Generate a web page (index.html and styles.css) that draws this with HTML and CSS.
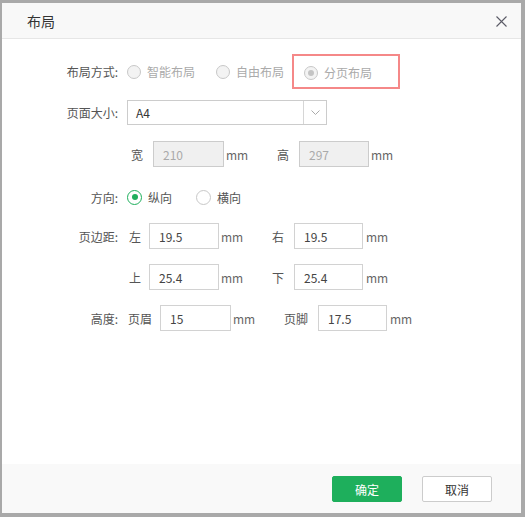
FILE: index.html
```html
<!DOCTYPE html>
<html>
<head>
<meta charset="utf-8">
<link rel="stylesheet" href="styles.css">
</head>
<body>
<div class="dialog">
  <div class="header">
    <span class="title">布局</span>
    <svg class="close" width="11" height="11" viewBox="0 0 11 11"><path d="M0.5 0.5 L10.5 10.5 M10.5 0.5 L0.5 10.5" stroke="#5a5a66" stroke-width="1.1" fill="none"/></svg>
  </div>
  <div class="content">
    <div class="row r1">
      <span class="label">布局方式:</span>
      <span class="opt dis o1"><span class="radio"></span>智能布局</span>
      <span class="opt dis o2"><span class="radio"></span>自由布局</span>
      <span class="hl"><span class="opt dis"><span class="radio sel-dis"></span>分页布局</span></span>
    </div>
    <div class="row r2">
      <span class="label">页面大小:</span>
      <div class="select"><span class="sval">A4</span><span class="sarrow"><svg width="9" height="5" viewBox="0 0 9 5"><path d="M0.5 0.5 L4.5 4.5 L8.5 0.5" stroke="#aaa" stroke-width="1" fill="none"/></svg></span></div>
    </div>
    <div class="row r3">
      <span class="label"></span>
      <span class="sub s-w">宽</span>
      <span class="input disabled w71">210</span>
      <span class="unit u51">mm</span>
      <span class="sub s-h">高</span>
      <span class="input disabled w70">297</span>
      <span class="unit">mm</span>
    </div>
    <div class="row r4">
      <span class="label">方向:</span>
      <span class="opt o-v"><span class="radio on"></span>纵向</span>
      <span class="opt"><span class="radio"></span>横向</span>
    </div>
    <div class="row r5">
      <span class="label">页边距:</span>
      <span class="sub s-l">左</span>
      <span class="input w70">19.5</span>
      <span class="unit u51">mm</span>
      <span class="sub s-h">右</span>
      <span class="input w69">19.5</span>
      <span class="unit u3">mm</span>
    </div>
    <div class="row r6">
      <span class="label"></span>
      <span class="sub s-l">上</span>
      <span class="input w70">25.4</span>
      <span class="unit u51">mm</span>
      <span class="sub s-h">下</span>
      <span class="input w69">25.4</span>
      <span class="unit u3">mm</span>
    </div>
    <div class="row r7">
      <span class="label">高度:</span>
      <span class="sub s-hd">页眉</span>
      <span class="input w71">15</span>
      <span class="unit u50">mm</span>
      <span class="sub s-ft">页脚</span>
      <span class="input w69">17.5</span>
      <span class="unit u3">mm</span>
    </div>
  </div>
  <div class="footer">
    <button class="btn primary">确定</button>
    <button class="btn">取消</button>
  </div>
</div>
</body>
</html>
```
FILE: styles.css
```css
* { box-sizing: border-box; }
html, body { margin: 0; padding: 0; }
body {
  width: 525px;
  height: 517px;
  background: #a9a9a9;
  font-family: "Noto Sans CJK SC", "Noto Sans", sans-serif;
  font-size: 12px;
  color: #555;
  overflow: hidden;
  padding-top: 3px;
  padding-left: 2px;
}
.dialog {
  width: 519px;
  height: 510px;
  background: #fff;
  display: flex;
  flex-direction: column;
}
.header {
  height: 36px;
  background: #f8f8f8;
  border-bottom: 1px solid #e6e6e6;
  display: flex;
  align-items: center;
  justify-content: space-between;
  padding: 0 14px 0 25px;
  flex: none;
}
.title { font-size: 14px; color: #333; }
.close { display: block; margin-top: 1px; }
.content {
  flex: 1;
  padding-top: 15px;
}
.row {
  display: flex;
  align-items: center;
}
.label {
  width: 116px;
  margin-right: 9px;
  text-align: right;
  color: #555;
  flex: none;
}
.r1 { height: 35px; }
.r2 { margin-top: 11px; }
.r3 { margin-top: 16px; }
.r4 { margin-top: 20px; height: 20px; }
.r5 { margin-top: 16px; }
.r6 { margin-top: 15px; }
.r7 { margin-top: 15px; }

.opt { display: flex; align-items: center; color: #555; white-space: nowrap; }
.opt.dis { color: #aaa; }
.radio {
  width: 14px;
  height: 14px;
  border: 1px solid #c8c8c8;
  border-radius: 50%;
  background: #f3f3f3;
  margin-right: 6px;
  position: relative;
  flex: none;
}
.opt:not(.dis) .radio { background: #fff; width: 15px; height: 15px; }
.radio.sel-dis::after, .radio.on::after {
  content: "";
  position: absolute;
  left: 3px; top: 3px;
  width: 6px; height: 6px;
  border-radius: 50%;
  background: #c4c4c4;
}
.radio.on { border-color: #1eaf5c; }
.radio.on::after { background: #1eaf5c; left: 3.5px; top: 3.5px; }
.o1 { margin-right: 21px; }
.o2 { margin-right: 8px; }
.hl {
  border: 2px solid #f58888;
  width: 108px;
  height: 35px;
  padding-left: 10px;
  display: flex;
  align-items: center;
  padding-top: 2px;
}
.o-v { margin-right: 24px; }

.select {
  width: 200px;
  height: 25px;
  border: 1px solid #ccc;
  display: flex;
  align-items: center;
}
.sval { flex: 1; padding-left: 8px; color: #333; }
.sarrow {
  width: 23px;
  height: 100%;
  border-left: 1px solid #d6d6d6;
  display: flex;
  align-items: center;
  justify-content: center;
}
.sarrow svg { display: block; }

.sub { flex: none; color: #555; text-align: right; }
.s-w { width: 16px; margin-left: 2px; margin-right: 10px; margin-left: 4px; }
.r3 .sub.s-w { margin-left: 4px; }
.s-h { width: 12px; margin-right: 10px; }
.s-l { width: 14px; margin-right: 8px; }
.s-hd { width: 25px; margin-right: 8px; }
.s-ft { width: 25px; margin-right: 10px; }
.r3 .s-w { width: 12px; }

.input {
  height: 26px;
  border: 1px solid #d2d2d2;
  display: flex;
  align-items: center;
  padding-left: 9px;
  color: #444;
  flex: none;
  background: #fff;
}
.input.disabled { background: #f0f0f0; color: #aaa; border-color: #ccc; }
.w71 { width: 71px; }
.w70 { width: 70px; }
.w69 { width: 69px; }
.unit { color: #666; margin-left: 2px; flex: none; }
.u51 { width: 51px; }
.u50 { width: 50px; }
.u3 { margin-left: 3px; }

.footer {
  height: 49px;
  background: #f9f9f9;
  flex: none;
  display: flex;
  justify-content: flex-end;
  align-items: flex-start;
  padding: 12px 29px 0 0;
  gap: 20px;
}
.btn {
  width: 70px;
  height: 26px;
  border: 1px solid #ccc;
  background: #fff;
  color: #333;
  font-family: inherit;
  font-size: 12px;
  border-radius: 2px;
  padding: 0;
}
.btn.primary { background: #1eaf5c; border-color: #1eaf5c; color: #fff; }
```
